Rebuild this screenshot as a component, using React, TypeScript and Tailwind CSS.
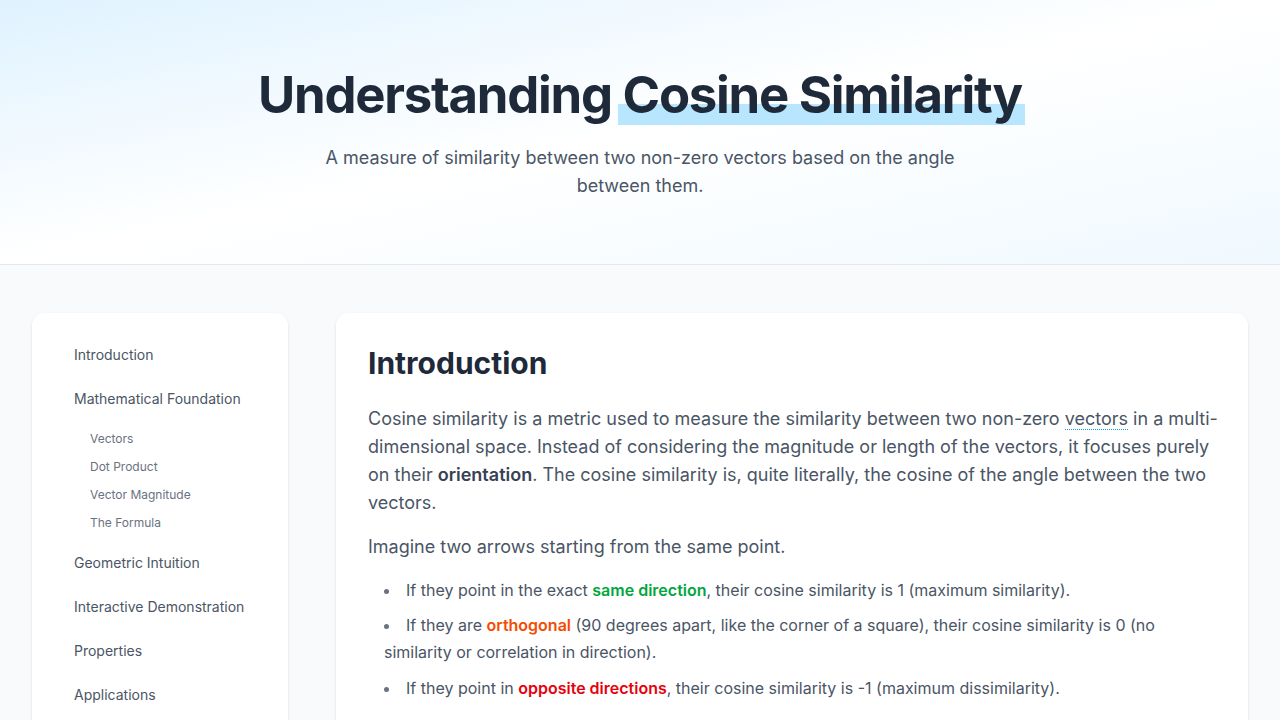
const nav = [
  { label: "Introduction" },
  {
    label: "Mathematical Foundation",
    children: ["Vectors", "Dot Product", "Vector Magnitude", "The Formula"],
  },
  { label: "Geometric Intuition" },
  { label: "Interactive Demonstration" },
  { label: "Properties" },
  { label: "Applications" },
  { label: "Conclusion" },
];

function Sidebar() {
  return (
    <aside className="w-64 shrink-0">
      <nav className="bg-white rounded-xl shadow-sm p-6">
        <ul>
          {nav.map((item) => (
            <li key={item.label} className="mb-2">
              <a className="block pl-[18px] pr-4 py-2 text-sm text-gray-600">{item.label}</a>
              {item.children && (
                <ul className="mt-2 pl-4">
                  {item.children.map((c) => (
                    <li key={c}>
                      <a className="block pl-[18px] pr-4 py-1.5 text-xs text-gray-500">{c}</a>
                    </li>
                  ))}
                </ul>
              )}
            </li>
          ))}
        </ul>
      </nav>
    </aside>
  );
}

export default function App() {
  return (
    <div className="min-h-screen bg-gray-50 font-['Inter','Noto_Sans',sans-serif]">
      <header className="bg-linear-to-br from-sky-100 via-white to-sky-50 border-b border-gray-200 py-16 px-8 text-center">
        <h1 className="text-[3.18rem] leading-[1.2] font-bold text-gray-800 tracking-tight mb-[19px]">
          Understanding{" "}
          <span className="relative inline-block">
            <span className="absolute -left-[5px] -right-[3px] bottom-0 h-[21px] bg-sky-200"></span>
            <span className="relative">Cosine Similarity</span>
          </span>
        </h1>
        <p className="max-w-2xl mx-auto text-lg leading-7 text-gray-600">
          A measure of similarity between two non-zero vectors based on the angle between them.
        </p>
      </header>

      <div className="flex gap-12 px-8 pt-12 pb-16">
        <Sidebar />
        <main className="flex-1 bg-white rounded-xl shadow-sm pl-8 pr-6 py-8">
          <h2 className="text-3xl leading-9 font-bold text-gray-800 mb-6">Introduction</h2>
          <p className="text-lg leading-7 text-gray-600 mb-4">
            Cosine similarity is a metric used to measure the similarity between two non-zero{" "}
            <span className="border-b border-dotted border-sky-500">vectors</span> in a
            multi-dimensional space. Instead of considering the magnitude or length of the vectors,
            it focuses purely on their <strong className="font-semibold text-gray-700">orientation</strong>. The
            cosine similarity is, quite literally, the cosine of the angle between the two vectors.
          </p>
          <p className="text-lg leading-7 text-gray-600 mb-4">
            Imagine two arrows starting from the same point.
          </p>
          <ul className="list-disc list-inside pl-4 pr-2 text-base leading-[1.7] text-gray-600 marker:text-gray-500">
            <li className="mb-2">
              If they point in the exact{" "}
              <span className="font-semibold text-green-600">same direction</span>, their cosine
              similarity is 1 (maximum similarity).
            </li>
            <li className="mb-2">
              If they are <span className="font-semibold text-orange-600">orthogonal</span> (90
              degrees apart, like the corner of a square), their cosine similarity is 0 (no
              similarity or correlation in direction).
            </li>
            <li className="mb-2">
              If they point in{" "}
              <span className="font-semibold text-red-600">opposite directions</span>, their cosine
              similarity is -1 (maximum dissimilarity).
            </li>
          </ul>
          <p className="text-lg leading-7 text-gray-600 mt-4">
            This makes cosine similarity especially useful when the direction of data matters more
            than its scale.
          </p>
        </main>
      </div>
    </div>
  );
}
